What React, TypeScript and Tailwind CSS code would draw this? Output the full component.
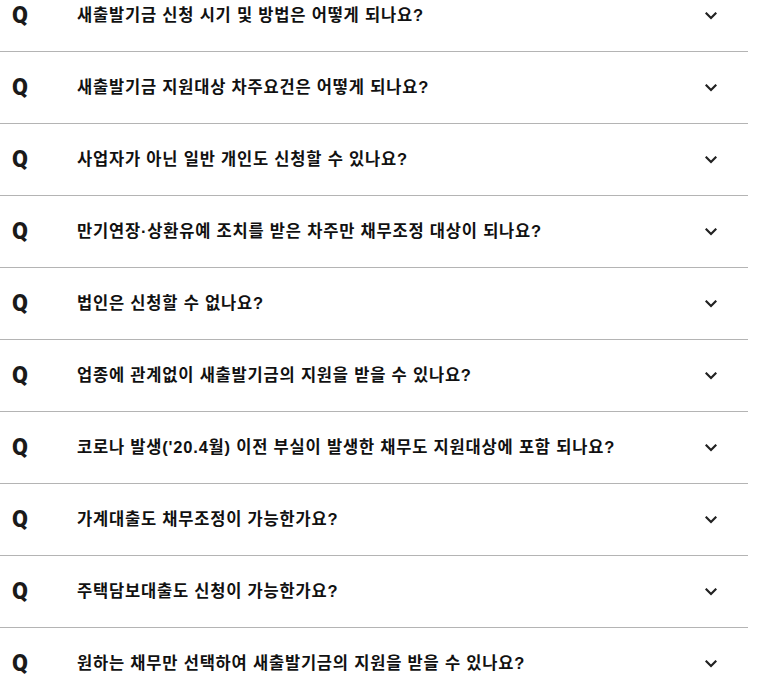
import React from "react"

const questions = [
  "새출발기금 신청 시기 및 방법은 어떻게 되나요?",
  "새출발기금 지원대상 차주요건은 어떻게 되나요?",
  "사업자가 아닌 일반 개인도 신청할 수 있나요?",
  "만기연장·상환유예 조치를 받은 차주만 채무조정 대상이 되나요?",
  "법인은 신청할 수 없나요?",
  "업종에 관계없이 새출발기금의 지원을 받을 수 있나요?",
  "코로나 발생('20.4월) 이전 부실이 발생한 채무도 지원대상에 포함 되나요?",
  "가계대출도 채무조정이 가능한가요?",
  "주택담보대출도 신청이 가능한가요?",
  "원하는 채무만 선택하여 새출발기금의 지원을 받을 수 있나요?",
]

function Chevron() {
  return (
    <svg width="12" height="8" viewBox="0 0 12 8" fill="none" className="block">
      <path d="M1.5 1.5 L6 6 L10.5 1.5" stroke="#222" strokeWidth="2.2" strokeLinecap="square" />
    </svg>
  )
}

export default function App() {
  return (
    <div className="bg-white w-[761px] h-[693px] overflow-hidden">
      <ul className="w-[748px] -mt-[20px]">
        {questions.map((q) => (
          <li key={q} className="flex items-center h-[72px] border-b border-[#b4b4b4]">
            <span
              className="w-[77px] pl-[12px] text-[23px] font-black text-[#1a1a1a] leading-none"
              style={{ fontFamily: "Roboto, sans-serif" }}
            >
              Q
            </span>
            <span
              className="flex-1 text-[16.5px] font-bold text-[#111] tracking-[0.8px]"
              style={{ fontFamily: '"Liberation Sans", "Noto Sans CJK KR", sans-serif' }}
            >
              {q}
            </span>
            <span className="pr-[31px]">
              <Chevron />
            </span>
          </li>
        ))}
      </ul>
    </div>
  )
}
